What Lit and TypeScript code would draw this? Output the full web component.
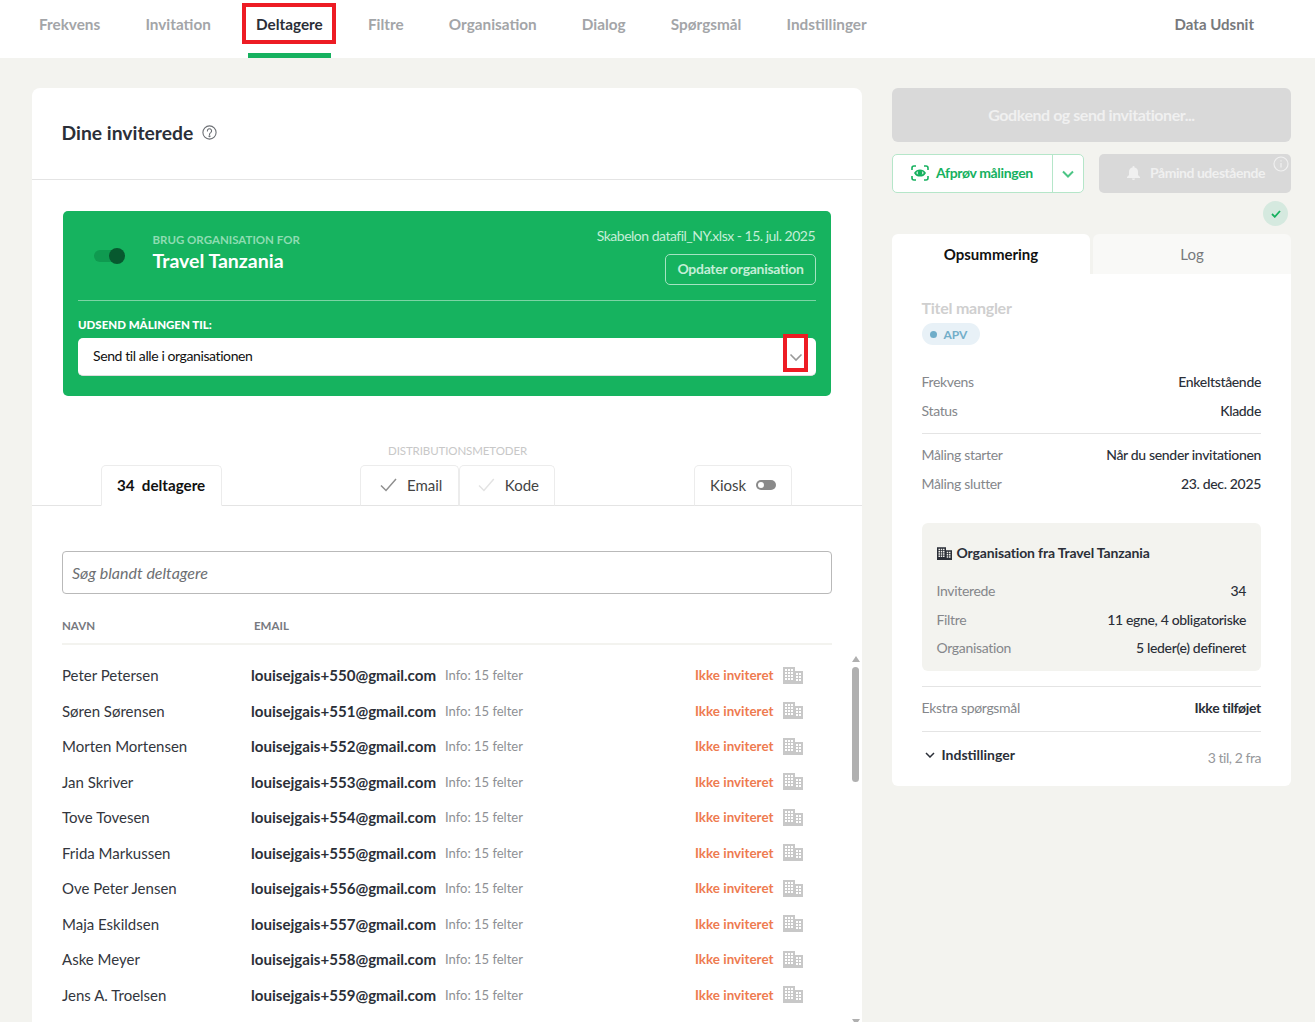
import { LitElement, html, css, svg } from "lit";
import { customElement } from "lit/decorators.js";

const NAV = ["Frekvens", "Invitation", "Deltagere", "Filtre", "Organisation", "Dialog", "Spørgsmål", "Indstillinger"];
const PEOPLE = [
  "Peter Petersen", "Søren Sørensen", "Morten Mortensen", "Jan Skriver", "Tove Tovesen",
  "Frida Markussen", "Ove Peter Jensen", "Maja Eskildsen", "Aske Meyer", "Jens A. Troelsen",
];

const building = (color: string, w = 20, h = 17) => svg`
  <svg width=${w} height=${h} viewBox="0 0 20 17" fill=${color}>
    <path fill-rule="evenodd" d="M0 0h12v4h8v13H0zM2 2v2h2V2zm3 0v2h2V2zm3 0v2h2V2zM2 5v2h2V5zm3 0v2h2V5zm3 0v2h2V5zM2 8v2h2V8zm3 0v2h2V8zm3 0v2h2V8zM2 11v2h2v-2zm3 0v2h2v-2zm3 0v2h2v-2zm5-5v2h2V6zm3 0v2h2V6zm-3 3v2h2V9zm3 0v2h2V9zm-3 3v2h2v-2zm3 0v2h2v-2z"/>
  </svg>`;

@customElement("app-root")
export class AppRoot extends LitElement {
  static styles = css`
    :host {
      display: block;
      height: 1022px;
      overflow: hidden;
      background: #f3f3ef;
      font-family: Lato, "Liberation Sans", sans-serif;
      color: #2b2f38;
    }
    * { box-sizing: border-box; }

    .nav {
      display: flex;
      height: 58px;
      background: #fff;
      padding: 0 53px 0 31px;
      gap: 29.2px;
    }
    .nav-item {
      position: relative;
      padding: 0 8px;
      height: 58px;
      line-height: 48px;
      font-size: 15.3px;
      font-weight: 700;
      color: #a3a5a8;
      white-space: nowrap;
    }
    .nav-item.active { color: #2b2f38; border-bottom: 5px solid #16b15f; }
    .nav-item.end { margin-left: auto; color: #77797c; font-size: 15px; }
    .mark { position: absolute; border: 4px solid #ed1c24; pointer-events: none; }
    .mark-nav { left: -6px; top: 3px; width: 94px; height: 41px; }
    .mark-select { right: 8px; top: -4px; width: 25px; height: 38px; }

    .page {
      display: grid;
      grid-template-columns: 830px 399px;
      gap: 30px;
      padding: 30px 0 0 32px;
      align-items: start;
    }

    .main { background: #fff; border-radius: 8px 8px 0 0; height: 940px; overflow: hidden; }
    .main-head {
      height: 92px;
      border-bottom: 1px solid #e4e4e4;
      display: flex;
      align-items: center;
      gap: 9px;
      padding: 0 30px 2px 29.5px;
    }
    h1 { margin: 0; font-size: 19.3px; font-weight: 700; }

    .green {
      position: relative;
      margin: 31px 31px 0;
      height: 185px;
      background: #16b35f;
      border-radius: 5px;
      padding: 0 15px;
      color: #fff;
    }
    .green-top {
      height: 90px;
      border-bottom: 1px solid #7cd4a4;
      display: flex;
      align-items: flex-start;
    }
    .switch { position: relative; width: 31px; height: 16px; margin: 37px 27.500px 0 16px; flex: none; }
    .switch i { position: absolute; left: 0; top: 2px; width: 28px; height: 12px; border-radius: 6px; background: #0f9a50; }
    .switch b { position: absolute; right: 0; top: 0; width: 16px; height: 16px; border-radius: 50%; background: #07592f; }
    .org-label { margin-top: 22px; font-size: 11.5px; font-weight: 700; color: #8edcb2; line-height: 13px; }
    .org-name { margin-top: 3px; font-size: 19.5px; font-weight: 700; line-height: 24px; }
    .org-side { margin-left: auto; display: flex; flex-direction: column; align-items: flex-end; }
    .org-file { margin-top: 16px; font-size: 14px; line-height: 18px; color: #c4eed7; letter-spacing: -0.5px; padding-right: 1px; }
    .org-btn {
      margin-top: 9px;
      height: 31px;
      width: 151px;
      border: 1px solid #a5e3c2;
      border-radius: 5px;
      font-size: 14px;
      font-weight: 700;
      text-align: center;
      line-height: 28px;
      color: #c4eed7;
      letter-spacing: -0.3px;
    }
    .send-label { margin-top: 17px; font-size: 11.5px; font-weight: 900; line-height: 13px; }
    .select {
      position: relative;
      margin-top: 7px;
      height: 38px;
      background: #fff;
      border-radius: 5px;
      border-bottom: 1px solid #ddd;
      color: #111;
      font-size: 14px;
      line-height: 35px;
      padding-left: 15px;
      letter-spacing: -0.4px;
    }
    .select svg { position: absolute; right: 13px; top: 15px; }

    .dist-label { margin-top: 48px; padding-left: 356px; font-size: 11.5px; line-height: 14px; color: #c8c8c8; letter-spacing: -0.1px; }
    .tabs {
      display: flex;
      margin-top: 7px;
      height: 41px;
      border-bottom: 1px solid #e4e4e4;
      padding-left: 69px;
    }
    .tab {
      display: flex;
      align-items: center;
      height: 41px;
      border: 1px solid #ececec;
      border-bottom: 1px solid #e4e4e4;
      border-radius: 5px 5px 0 0;
      font-size: 15px;
      color: #444;
      gap: 10px;
      padding: 0 15px 2px;
    }
    .tab-count {
      width: 121px;
      font-weight: 700;
      color: #111;
      border-bottom-color: #fff;
      margin-right: 138px;
      word-spacing: 3.500px;
      font-size: 15.2px;
    }
    .tab-email { width: 99px; padding-left: 19px; }
    .tab-code { width: 96px; padding-left: 18px; margin-right: 139px; }
    .tab-kiosk { width: 98px; }
    .kiosk-switch { position: relative; width: 20px; height: 10px; border-radius: 5px; background: #8a8a8a; }
    .kiosk-switch::after { content: ""; position: absolute; left: 2px; top: 2px; width: 6px; height: 6px; border-radius: 50%; background: #fff; }

    .search {
      margin: 45px 30px 0;
      height: 43px;
      border: 1px solid #b9b9b9;
      border-radius: 4px;
      padding-left: 9px;
      line-height: 42px;
      font-size: 16px;
      font-style: italic;
      color: #6d6f72;
    }
    .thead {
      display: flex;
      margin: 25px 30px 0;
      height: 26px;
      border-bottom: 2px solid #f3f3ef;
      font-size: 11.5px;
      font-weight: 700;
      color: #77797f;
      line-height: 14px;
    }
    .thead span:first-child { width: 192px; }

    .list { position: relative; padding: 12.5px 0 0 30px; }
    .row { display: flex; align-items: center; height: 35.5px; width: 741px; }
    .name { width: 189px; font-size: 15px; color: #33363d; white-space: nowrap; }
    .address { width: 194px; font-size: 15.1px; font-weight: 700; color: #2b2f38; white-space: nowrap; }
    .info { width: 250px; font-size: 13px; color: #8e9094; white-space: nowrap; }
    .status { width: 88px; font-size: 13.4px; font-weight: 700; color: #ee7b50; white-space: nowrap; }
    .spacer { width: 721px; flex: none; }
    .scroll { position: absolute; left: 820px; top: 9px; width: 8px; height: 380px; }
    .thumb { position: absolute; left: 0; top: 13px; width: 7px; height: 115px; border-radius: 4px; background: #b0b0b0; }
    .arrow { position: absolute; left: 0; width: 0; height: 0; border-left: 4px solid transparent; border-right: 4px solid transparent; }
    .arrow.up { top: 2px; border-bottom: 6px solid #b0b0b0; }
    .arrow.down { top: 365px; border-top: 6px solid #b0b0b0; }

    .side { display: flex; flex-direction: column; }
    .send-btn {
      height: 54px;
      border-radius: 6px;
      background: #d9d9d9;
      color: #f0f0f0;
      font-size: 16px;
      font-weight: 700;
      text-align: center;
      line-height: 54px;
      letter-spacing: -0.45px;
    }
    .actions { display: flex; margin-top: 12px; height: 39px; justify-content: space-between; }
    .try {
      display: flex;
      width: 192px;
      background: #fff;
      border: 1px solid #b5e6c9;
      border-radius: 5px;
      color: #16b15f;
      font-size: 14px;
      font-weight: 700;
    }
    .try-main { width: 160px; display: flex; align-items: center; gap: 7px; padding: 0 0 2px 18px; border-right: 1px solid #b5e6c9; letter-spacing: -0.35px; }
    .try-caret { flex: 1; display: flex; align-items: center; justify-content: center; }
    .remind {
      position: relative;
      width: 192px;
      background: #d9d9d9;
      border-radius: 5px;
      color: #f0f0f0;
      font-size: 14px;
      font-weight: 700;
      display: flex;
      align-items: center;
      gap: 10px;
      padding: 0 0 2px 28px;
      letter-spacing: -0.45px;
    }
    .remind .i { position: absolute; right: 2px; top: 2px; }
    .ok {
      align-self: flex-end;
      margin: 8px 3px 0 0;
      width: 25px;
      height: 25px;
      border-radius: 50%;
      background: #d5e9df;
      display: flex;
      align-items: center;
      justify-content: center;
    }
    .side-tabs { display: flex; justify-content: space-between; margin-top: 8px; height: 40px; }
    .side-tab {
      width: 198px;
      border-radius: 6px 6px 0 0;
      font-size: 15px;
      line-height: 41px;
      text-align: center;
      background: #fff;
      color: #111;
      font-weight: 700;
    }
    .side-tab.log { background: #f9f9f7; color: #77797c; font-weight: 400; }
    .summary { background: #fff; border-radius: 0 0 6px 6px; height: 512px; padding: 25px 30px 0 29.5px; }
    .title { font-size: 16px; font-weight: 700; color: #cfcfcf; line-height: 18px; letter-spacing: -0.25px; }
    .pill {
      display: flex;
      align-items: center;
      gap: 7px;
      width: 58px;
      height: 22px;
      margin-top: 6px;
      padding-left: 8px;
      border-radius: 11px;
      background: #e8f1f7;
      color: #73aec9;
      font-size: 12px;
      font-weight: 700;
    }
    .pill i { width: 7px; height: 7px; border-radius: 50%; background: #6fadc9; }
    .kv { display: flex; justify-content: space-between; align-items: center; font-size: 14px; height: 29px; letter-spacing: -0.33px; }
    .kv span { color: #85878b; }
    .kv b { font-weight: 500; color: #2b2f38; }
    .group { margin-top: 22px; padding-bottom: 8px; border-bottom: 1px solid #e4e4e4; }
    .group.second { margin-top: 6px; padding-bottom: 0; border-bottom: 0; }
    .org-box { margin-top: 25px; height: 148px; background: #f3f3ef; border-radius: 6px; padding: 21px 15px 0; }
    .org-head { display: flex; align-items: center; gap: 5px; font-size: 14px; font-weight: 700; line-height: 18px; letter-spacing: -0.15px; }
    .org-rows { margin-top: 14px; }
    .org-rows .kv { height: 28.7px; }
    .extra { margin-top: 15px; border-top: 1px solid #e4e4e4; border-bottom: 1px solid #e4e4e4; height: 46px; }
    .extra .kv { height: 41px; }
    .extra b { font-weight: 700; }
    .settings { display: flex; justify-content: space-between; font-size: 14px; padding-top: 12px; }
    .settings-l { display: flex; align-items: center; gap: 7px; font-weight: 700; padding-left: 3px; line-height: 20px; }
    .settings-r { color: #96989b; padding-top: 5px; letter-spacing: -0.45px; }
  `;

  render() {
    return html`
      <nav class="nav">
        ${NAV.map((n) => n === "Deltagere"
          ? html`<div class="nav-item active">${n}<span class="mark mark-nav"></span></div>`
          : html`<div class="nav-item">${n}</div>`)}
        <div class="nav-item end">Data Udsnit</div>
      </nav>
      <div class="page">
        ${this.renderMain()}
        ${this.renderSide()}
      </div>
    `;
  }

  renderMain() {
    return html`
      <section class="main">
        <header class="main-head">
          <h1>Dine inviterede</h1>
          <svg width="15" height="15" viewBox="0 0 15 15" fill="none" stroke="#6d7075" stroke-width="1.1">
            <circle cx="7.5" cy="7.5" r="6.6"/>
            <path d="M5.4 5.9a2.1 2.1 0 1 1 3.3 1.7c-.8.5-1.2.9-1.2 1.8" stroke-linecap="round"/>
            <circle cx="7.5" cy="11.2" r=".5" fill="#6d7075"/>
          </svg>
        </header>
        <div class="green">
          <div class="green-top">
            <div class="switch"><i></i><b></b></div>
            <div>
              <div class="org-label">BRUG ORGANISATION FOR</div>
              <div class="org-name">Travel Tanzania</div>
            </div>
            <div class="org-side">
              <div class="org-file">Skabelon datafil_NY.xlsx - 15. jul. 2025</div>
              <div class="org-btn">Opdater organisation</div>
            </div>
          </div>
          <div class="send-label">UDSEND MÅLINGEN TIL:</div>
          <div class="select">
            Send til alle i organisationen
            <svg width="14" height="9" viewBox="0 0 14 9" fill="none" stroke="#999" stroke-width="1.6"><path d="M1.5 1.5 7 7l5.5-5.5"/></svg>
            <span class="mark mark-select"></span>
          </div>
        </div>
        <div class="dist-label">DISTRIBUTIONSMETODER</div>
        <div class="tabs">
          <div class="tab tab-count">34 deltagere</div>
          <div class="tab tab-email">
            <svg width="17" height="14" viewBox="0 0 17 14" fill="none" stroke="#8f8f8f" stroke-width="1.5"><path d="M1 7.5 6 12.5 16 1"/></svg>
            Email
          </div>
          <div class="tab tab-code">
            <svg width="17" height="14" viewBox="0 0 17 14" fill="none" stroke="#e3e3e3" stroke-width="1.5"><path d="M1 7.5 6 12.5 16 1"/></svg>
            Kode
          </div>
          <div class="tab tab-kiosk">Kiosk <span class="kiosk-switch"></span></div>
        </div>
        <div class="search">Søg blandt deltagere</div>
        <div class="thead"><span>NAVN</span><span>EMAIL</span></div>
        <div class="list">
          ${PEOPLE.map((p, i) => html`
            <div class="row">
              <div class="name">${p}</div>
              <div class="address">louisejgais+${550 + i}@gmail.com</div>
              <div class="info">Info: 15 felter</div>
              <div class="status">Ikke inviteret</div>
              ${building("#c8c8c8")}
            </div>`)}
          <div class="row"><div class="spacer"></div>${building("#c8c8c8")}</div>
          <div class="scroll"><i class="arrow up"></i><i class="thumb"></i><i class="arrow down"></i></div>
        </div>
      </section>
    `;
  }

  renderSide() {
    return html`
      <aside class="side">
        <div class="send-btn">Godkend og send invitationer...</div>
        <div class="actions">
          <div class="try">
            <div class="try-main">
              <svg width="18" height="16" viewBox="0 0 18 16" fill="none" stroke="#16b15f" stroke-width="1.6">
                <path d="M1 5V3a2 2 0 0 1 2-2h2M13 1h2a2 2 0 0 1 2 2v2M17 11v2a2 2 0 0 1-2 2h-2M5 15H3a2 2 0 0 1-2-2v-2"/>
                <path d="M4 8S5.800 5.200 9 5.200 14 8 14 8 12.200 10.800 9 10.800 4 8 4 8z"/>
                <circle cx="9" cy="8" r="1.600" fill="#16b15f"/>
              </svg>
              Afprøv målingen
            </div>
            <div class="try-caret">
              <svg width="12" height="8" viewBox="0 0 12 8" fill="none" stroke="#4cc585" stroke-width="2"><path d="M1 1.500 6 6.500l5-5"/></svg>
            </div>
          </div>
          <div class="remind">
            <svg width="13" height="14" viewBox="0 0 13 14" fill="#f0f0f0"><path d="M6.500 0a1 1 0 0 1 1 1v.6A4.500 4.500 0 0 1 11 6v3l2 2v1H0v-1l2-2V6a4.500 4.500 0 0 1 3.500-4.400V1a1 1 0 0 1 1-1zM5 12.500h3a1.500 1.500 0 0 1-3 0z"/></svg>
            Påmind udestående
            <svg class="i" width="16" height="16" viewBox="0 0 16 16" fill="none" stroke="#f0f0f0" stroke-width="1.200"><circle cx="8" cy="8" r="7"/><path d="M8 7v4.500M8 4.200v1.300"/></svg>
          </div>
        </div>
        <div class="ok">
          <svg width="10" height="8" viewBox="0 0 10 8" fill="none" stroke="#16b15f" stroke-width="1.800"><path d="M1 4l2.800 2.800L9 1"/></svg>
        </div>
        <div class="side-tabs">
          <div class="side-tab">Opsummering</div>
          <div class="side-tab log">Log</div>
        </div>
        <div class="summary">
          <div class="title">Titel mangler</div>
          <div class="pill"><i></i>APV</div>
          <div class="group">
            <div class="kv"><span>Frekvens</span><b>Enkeltstående</b></div>
            <div class="kv"><span>Status</span><b>Kladde</b></div>
          </div>
          <div class="group second">
            <div class="kv"><span>Måling starter</span><b>Når du sender invitationen</b></div>
            <div class="kv"><span>Måling slutter</span><b>23. dec. 2025</b></div>
          </div>
          <div class="org-box">
            <div class="org-head">${building("#2b2f38", 15, 13)} Organisation fra Travel Tanzania</div>
            <div class="org-rows">
              <div class="kv"><span>Inviterede</span><b>34</b></div>
              <div class="kv"><span>Filtre</span><b>11 egne, 4 obligatoriske</b></div>
              <div class="kv"><span>Organisation</span><b>5 leder(e) defineret</b></div>
            </div>
          </div>
          <div class="extra">
            <div class="kv"><span>Ekstra spørgsmål</span><b>Ikke tilføjet</b></div>
          </div>
          <div class="settings">
            <div class="settings-l">
              <svg width="10" height="6" viewBox="0 0 10 6" fill="none" stroke="#2b2f38" stroke-width="1.500"><path d="M1 1l4 4 4-4"/></svg>
              Indstillinger
            </div>
            <div class="settings-r">3 til, 2 fra</div>
          </div>
        </div>
      </aside>
    `;
  }
}
